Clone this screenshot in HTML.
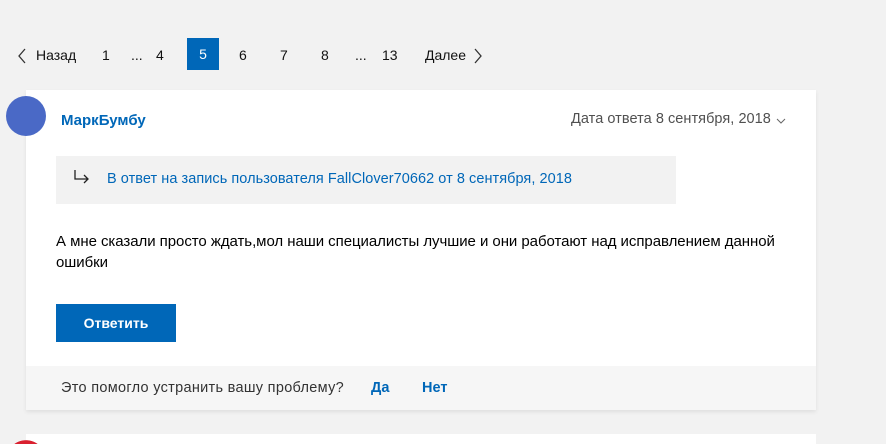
<!DOCTYPE html>
<html style="height:444px;overflow:hidden"><head><meta charset="utf-8"><style>
body{margin:0;width:886px;height:444px;background:#f2f2f2;font-family:"Liberation Sans",sans-serif;position:relative;overflow:hidden;color:#000}
.a{position:absolute;white-space:nowrap}
.pg{font-size:14px;top:47px;color:#111}
.card{position:absolute;left:26px;top:90px;width:790px;height:320px;background:#fff;box-shadow:0 2px 4px rgba(0,0,0,.08)}
.foot{position:absolute;left:26px;top:366px;width:790px;height:44px;background:#f6f6f6}
.blue{color:#0067b8}
</style></head><body>
<svg class="a" style="left:17px;top:47px" width="10" height="18"><path d="M8 2L2 9l6 7" fill="none" stroke="#333" stroke-width="1.3"/></svg>
<div class="a pg" style="left:36px">Назад</div>
<div class="a pg" style="left:102px">1</div>
<div class="a pg" style="left:131px">...</div>
<div class="a pg" style="left:156px">4</div>
<div class="a" style="left:187px;top:38px;width:32px;height:32px;background:#0067b8;color:#fff;font-size:14px;line-height:33px;text-align:center">5</div>
<div class="a pg" style="left:239px">6</div>
<div class="a pg" style="left:280px">7</div>
<div class="a pg" style="left:321px">8</div>
<div class="a pg" style="left:355px">...</div>
<div class="a pg" style="left:382px">13</div>
<div class="a pg" style="left:425px">Далее</div>
<svg class="a" style="left:473px;top:47px" width="10" height="18"><path d="M2 2l6 7-6 7" fill="none" stroke="#333" stroke-width="1.3"/></svg>

<div class="card"></div>
<div class="foot"></div>
<div class="a" style="left:6px;top:96px;width:40px;height:40px;border-radius:50%;background:#4a69c6"></div>
<div class="a blue" style="left:61px;top:112px;font-size:15px;font-weight:bold">МаркБумбу</div>
<div class="a" style="left:571px;top:111px;font-size:14.5px;color:#505050;letter-spacing:0.05px">Дата ответа 8 сентября, 2018</div>
<svg class="a" style="left:776px;top:117px" width="10" height="8"><path d="M1 2l4 4 4-4" fill="none" stroke="#666" stroke-width="1"/></svg>

<div class="a" style="left:56px;top:156px;width:620px;height:48px;background:#f2f2f2"></div>
<svg class="a" style="left:72px;top:169px" width="18" height="16"><path d="M3 1v9h13M12 6l4 4-4 4" fill="none" stroke="#222" stroke-width="1.3"/></svg>
<div class="a blue" style="left:107px;top:171px;font-size:14.5px;letter-spacing:0.05px">В ответ на запись пользователя FallClover70662 от 8 сентября, 2018</div>

<div class="a" style="left:56px;top:231px;font-size:15px;line-height:21px;letter-spacing:-0.05px">А мне сказали просто ждать,мол наши специалисты лучшие и они работают над исправлением данной<br>ошибки</div>

<div class="a" style="left:56px;top:304px;width:120px;height:38px;background:#0067b8;color:#fff;font-weight:bold;font-size:14px;line-height:38px;text-align:center">Ответить</div>

<div class="a" style="left:61px;top:380px;font-size:14.5px;color:#333;letter-spacing:0.3px">Это помогло устранить вашу проблему?</div>
<div class="a blue" style="left:371px;top:380px;font-size:14.5px;font-weight:bold">Да</div>
<div class="a blue" style="left:422px;top:380px;font-size:14.5px;font-weight:bold">Нет</div>

<div class="a" style="left:26px;top:434px;width:790px;height:10px;background:#fff"></div>
<div class="a" style="left:6px;top:440px;width:40px;height:4px;background:radial-gradient(circle 20px at 20px 20px,#d9202f 98%,transparent 100%)"></div>
</body></html>
